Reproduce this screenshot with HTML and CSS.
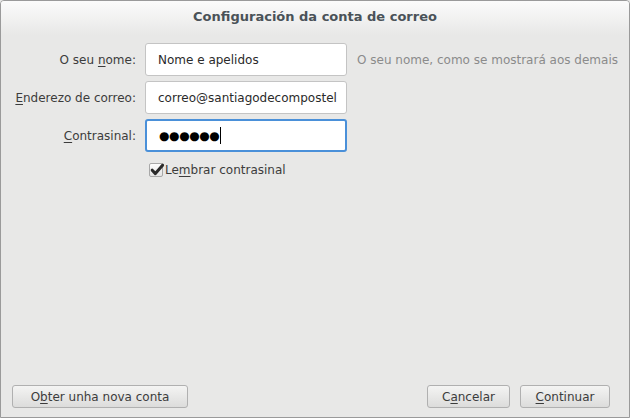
FILE: index.html
```html
<!DOCTYPE html>
<html>
<head>
<meta charset="utf-8">
<link rel="stylesheet" href="styles.css">
</head>
<body>
<div class="window">
  <div class="titlebar">Configuración da conta de correo</div>
  <div class="content">
    <div class="form">
      <div class="row">
        <label class="label">O seu <u>n</u>ome:</label>
        <div class="input">Nome e apelidos</div>
        <span class="hint">O seu nome, como se mostrará aos demais</span>
      </div>
      <div class="row">
        <label class="label"><u>E</u>nderezo de correo:</label>
        <div class="input">correo@santiagodecompostel</div>
      </div>
      <div class="row">
        <label class="label"><u>C</u>ontrasinal:</label>
        <div class="input focus"><span class="dots">●●●●●●</span><span class="caret"></span></div>
      </div>
      <div class="row check-row">
        <span class="label"></span>
        <span class="checkbox"><svg width="16" height="16" viewBox="0 0 16 16"><path d="M3.2 8.2 L6.4 11.6 L13.6 3.2" fill="none" stroke="#2a2a2a" stroke-width="3" stroke-linecap="round" stroke-linejoin="round"/></svg></span>
        <span class="check-label">Le<u>m</u>brar contrasinal</span>
      </div>
    </div>
    <div class="buttons">
      <button class="btn wide">O<u>b</u>ter unha nova conta</button>
      <span class="spacer"></span>
      <button class="btn cancel">C<u>a</u>ncelar</button>
      <button class="btn cont"><u>C</u>ontinuar</button>
    </div>
  </div>
</div>
</body>
</html>
```
FILE: styles.css
```css
html, body {
  margin: 0;
  padding: 0;
  background: #e8e8e7;
}
body {
  font-family: "DejaVu Sans", sans-serif;
  font-size: 12px;
  color: #3c3c3c;
}
.window {
  width: 630px;
  height: 418px;
  box-sizing: border-box;
  border: 1px solid #9a9a9a;
  border-radius: 4px 4px 0 0;
  background: #e8e8e7;
  display: flex;
  flex-direction: column;
  overflow: hidden;
}
.titlebar {
  height: 34px;
  flex: none;
  background: linear-gradient(#fbfbfb, #e8e8e7);
  text-align: center;
  font-weight: bold;
  font-size: 13px;
  color: #4a5258;
  line-height: 32px;
}
.content {
  flex: 1;
  display: flex;
  flex-direction: column;
  justify-content: space-between;
  padding: 8px 19px 9px 11px;
}
.form {
  display: flex;
  flex-direction: column;
  gap: 5px;
}
.row {
  display: flex;
  align-items: center;
  height: 33px;
}
.label {
  width: 124px;
  text-align: right;
  padding-right: 9px;
  flex: none;
  color: #3c3c3c;
}
.input {
  width: 202px;
  height: 33px;
  flex: none;
  box-sizing: border-box;
  background: #fff;
  border: 1px solid #c4c4c4;
  border-radius: 3px;
  padding: 0 12px;
  display: flex;
  align-items: center;
  color: #2a2a2a;
  font-size: 12px;
  white-space: nowrap;
  overflow: hidden;
}
.input.focus {
  border: 2px solid #4a90d9;
  padding: 0 11px 0 12px;
}
.dots {
  font-size: 12px;
  letter-spacing: -0.4px;
  color: #000;
}
.caret {
  display: inline-block;
  width: 1px;
  height: 17px;
  background: #000;
  margin-left: 1px;
}
.hint {
  margin-left: 10px;
  color: #8b8b8b;
  white-space: nowrap;
}
.check-row {
  height: 22px;
  margin-top: 2px;
}
.check-row .label {
  width: 137px;
  padding-right: 0;
}
.checkbox {
  position: relative;
  width: 14px;
  height: 14px;
  box-sizing: border-box;
  border: 1px solid #a8a8a8;
  border-radius: 2px;
  background: linear-gradient(#fdfdfd, #e4e4e4);
  margin-right: 2px;
}
.checkbox svg {
  position: absolute;
  left: -1px;
  top: -2px;
  display: block;
}
.check-label { color: #3c3c3c; }
.buttons {
  display: flex;
  align-items: center;
  gap: 10px;
}
.spacer { flex: 1; }
.btn {
  font-family: "DejaVu Sans", sans-serif;
  font-size: 12px;
  color: #3c3c3c;
  height: 23px;
  border: 1px solid #b0b0b0;
  border-radius: 3px;
  background: linear-gradient(#f4f4f3, #dcdcdb);
  padding: 0;
}
.btn.wide { width: 176px; }
.btn.cancel { width: 83px; }
.btn.cont { width: 90px; }
u { text-decoration: underline; text-underline-offset: 2px; }
```
